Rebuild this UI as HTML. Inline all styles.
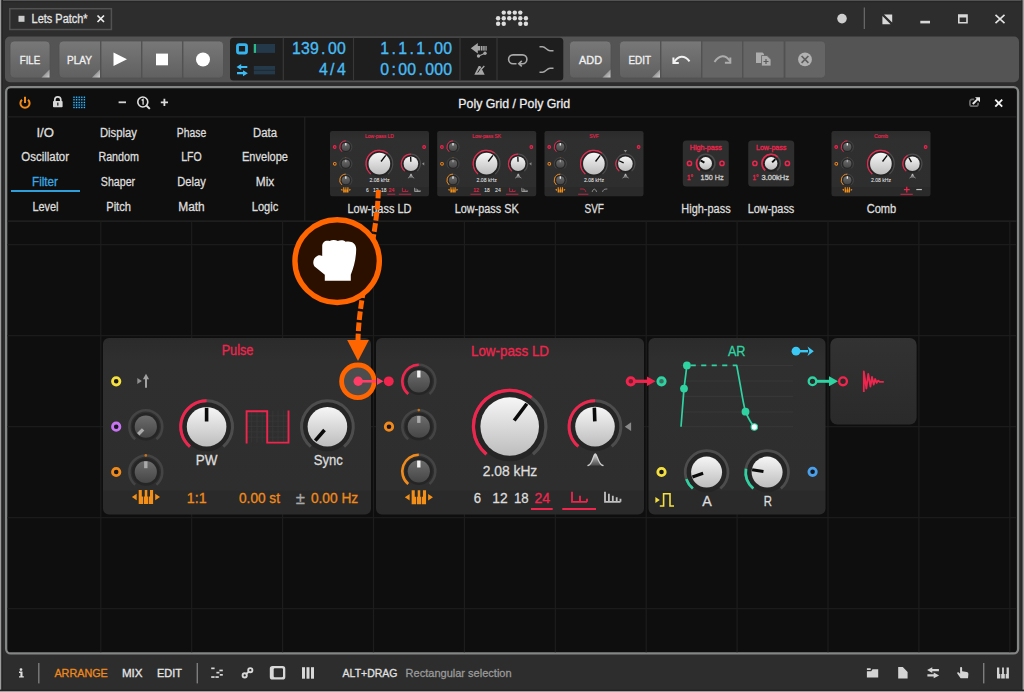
<!DOCTYPE html><html><head><meta charset="utf-8"><title>Poly Grid</title>
<style>html,body{margin:0;padding:0;background:#2d2d2d;}svg{display:block;font-family:"Liberation Sans",sans-serif;}</style></head><body>
<svg width="1024" height="692" viewBox="0 0 1024 692">
<defs>
<linearGradient id="gw" x1="0" y1="0" x2="0" y2="1"><stop offset="0" stop-color="#f6f6f6"/><stop offset="1" stop-color="#bdbdbd"/></linearGradient>
<linearGradient id="gd" x1="0" y1="0" x2="0" y2="1"><stop offset="0" stop-color="#6c6c6c"/><stop offset="1" stop-color="#464646"/></linearGradient>
<linearGradient id="gm" x1="0" y1="0" x2="0" y2="1"><stop offset="0" stop-color="#2b2b2b"/><stop offset="0.13" stop-color="#2f2f2f"/><stop offset="0.862" stop-color="#2e2e2e"/><stop offset="0.866" stop-color="#2a2a2a"/><stop offset="1" stop-color="#2a2a2a"/></linearGradient>
<linearGradient id="gm2" x1="0" y1="0" x2="0" y2="1"><stop offset="0" stop-color="#323232"/><stop offset="1" stop-color="#2a2a2a"/></linearGradient>
<linearGradient id="gb" x1="0" y1="0" x2="0" y2="1"><stop offset="0" stop-color="#787878"/><stop offset="1" stop-color="#606060"/></linearGradient>
<linearGradient id="gbell" x1="0" y1="0" x2="0" y2="1"><stop offset="0" stop-color="#e4e4e4"/><stop offset="1" stop-color="#6a6a6a" stop-opacity="0.55"/></linearGradient>
<linearGradient id="gtri" x1="0" y1="0" x2="1" y2="1"><stop offset="0.5" stop-color="#999"/><stop offset="1" stop-color="#d0d0d0"/></linearGradient>
<clipPath id="cpanel"><rect x="7.300" y="221" width="1009.600" height="431.300"/></clipPath>
</defs>
<rect width="1024" height="692" fill="#2d2d2d"/>
<rect width="1024" height="1.2" fill="#525252"/><rect y="1.2" width="1024" height="1" fill="#242424"/>
<rect x="1.2" width="1.8" height="692" fill="#252525"/><rect width="1.2" height="692" fill="#9c9c9c"/>
<rect x="1021.4" width="1.2" height="692" fill="#252525"/><rect x="1022.6" width="1.4" height="692" fill="#a0a0a0"/>
<rect y="689.6" width="1024" height="1.4" fill="#252525"/><rect y="691" width="1024" height="1" fill="#a0a0a0"/>
<rect x="9.8" y="8.7" width="101.6" height="20.8" fill="#2d2d2d" stroke="#525252" stroke-width="1.5"/>
<rect x="18.5" y="15.800" width="6" height="6" fill="#ccc"/>
<text x="31.6" y="23.2" font-size="12" fill="#e4e4e4" textLength="56" lengthAdjust="spacingAndGlyphs" stroke="#e4e4e4" stroke-width="0.3">Lets Patch*</text>
<path d="M97.500 15.500l6.500 6.500m0 -6.500l-6.500 6.500" stroke="#eee" stroke-width="1.700" fill="none"/>
<circle cx="503.75" cy="12.6" r="2.2" fill="#dedede"/>
<circle cx="509.25" cy="12.6" r="2.2" fill="#dedede"/>
<circle cx="514.8" cy="12.6" r="2.2" fill="#dedede"/>
<circle cx="520.3" cy="12.6" r="2.2" fill="#dedede"/>
<circle cx="498.1" cy="18.25" r="2.2" fill="#dedede"/>
<circle cx="503.75" cy="18.25" r="2.2" fill="#dedede"/>
<circle cx="509.25" cy="18.25" r="2.2" fill="#dedede"/>
<circle cx="514.8" cy="18.25" r="2.2" fill="#dedede"/>
<circle cx="520.3" cy="18.25" r="2.2" fill="#dedede"/>
<circle cx="525.9" cy="18.25" r="2.2" fill="#dedede"/>
<circle cx="498.1" cy="23.75" r="2.2" fill="#dedede"/>
<circle cx="503.75" cy="23.75" r="2.2" fill="#dedede"/>
<circle cx="520.3" cy="23.75" r="2.2" fill="#dedede"/>
<circle cx="525.9" cy="23.75" r="2.2" fill="#dedede"/>
<circle cx="842" cy="18.600" r="4.800" fill="#cfcfcf"/>
<rect x="863.700" y="7.500" width="1.300" height="21.500" fill="#666"/>
<path d="M884 14.400h8.200v8.200zM882.400 16v8.200h8.200z" fill="#d8d8d8"/>
<rect x="920.300" y="20.800" width="9.700" height="2.600" fill="#d8d8d8"/>
<path d="M958 14.200h9.800v9.400h-9.800zM959.600 17.600v4.400h6.600v-4.400z" fill="#d8d8d8" fill-rule="evenodd"/>
<path d="M995.500 14.800l9 8.400m0 -8.400l-9 8.400" stroke="#e4e4e4" stroke-width="1.600" fill="none"/>
<rect x="5" y="36.500" width="1014" height="45.800" rx="5" fill="#545454"/>
<path d="M14 41h32a4 4 0 0 1 4 4v29a4 4 0 0 1 -4 4h-32a4 4 0 0 1 -4 -4v-29a4 4 0 0 1 4 -4z" fill="url(#gb)" stroke="#505050" stroke-width="0.8"/>
<path d="M49.5 69.5v8h-8z" fill="url(#gtri)"/>
<text x="30" y="63.6" font-size="11" fill="#f0f0f0" text-anchor="middle" textLength="20.5" lengthAdjust="spacingAndGlyphs" stroke="#f0f0f0" stroke-width="0.35">FILE</text>
<path d="M63 41h37.49a0.01 0.01 0 0 1 0.01 0.01v36.98a0.01 0.01 0 0 1 -0.01 0.01h-37.49a4 4 0 0 1 -4 -4v-29a4 4 0 0 1 4 -4z" fill="url(#gb)" stroke="#505050" stroke-width="0.8"/>
<path d="M100.0 69.5v8h-8z" fill="url(#gtri)"/>
<text x="79.5" y="63.6" font-size="11" fill="#f0f0f0" text-anchor="middle" textLength="25" lengthAdjust="spacingAndGlyphs" stroke="#f0f0f0" stroke-width="0.35">PLAY</text>
<path d="M101.01 41h40.480000000000004a0.01 0.01 0 0 1 0.01 0.01v36.98a0.01 0.01 0 0 1 -0.01 0.01h-40.480000000000004a0.01 0.01 0 0 1 -0.01 -0.01v-36.98a0.01 0.01 0 0 1 0.01 -0.01z" fill="url(#gb)" stroke="#505050" stroke-width="0.8"/>
<path d="M113.500 52.500l13.500 6.800l-13.500 6.800z" fill="#fff"/>
<path d="M142.01 41h40.480000000000004a0.01 0.01 0 0 1 0.01 0.01v36.98a0.01 0.01 0 0 1 -0.01 0.01h-40.480000000000004a0.01 0.01 0 0 1 -0.01 -0.01v-36.98a0.01 0.01 0 0 1 0.01 -0.01z" fill="url(#gb)" stroke="#505050" stroke-width="0.8"/>
<rect x="156" y="53.600" width="12" height="11.700" fill="#fff"/>
<path d="M183.01 41h36.49a4 4 0 0 1 4 4v29a4 4 0 0 1 -4 4h-36.49a0.01 0.01 0 0 1 -0.01 -0.01v-36.98a0.01 0.01 0 0 1 0.01 -0.01z" fill="url(#gb)" stroke="#505050" stroke-width="0.8"/>
<circle cx="203" cy="59.500" r="7" fill="#fff"/>
<path d="M573.5 41h33.5a4 4 0 0 1 4 4v29a4 4 0 0 1 -4 4h-33.5a4 4 0 0 1 -4 -4v-29a4 4 0 0 1 4 -4z" fill="url(#gb)" stroke="#505050" stroke-width="0.8"/>
<path d="M610.5 69.5v8h-8z" fill="url(#gtri)"/>
<text x="590.5" y="63.6" font-size="11" fill="#f0f0f0" text-anchor="middle" textLength="23" lengthAdjust="spacingAndGlyphs" stroke="#f0f0f0" stroke-width="0.35">ADD</text>
<path d="M623.5 41h36.99a0.01 0.01 0 0 1 0.01 0.01v36.98a0.01 0.01 0 0 1 -0.01 0.01h-36.99a4 4 0 0 1 -4 -4v-29a4 4 0 0 1 4 -4z" fill="url(#gb)" stroke="#505050" stroke-width="0.8"/>
<path d="M660.0 69.5v8h-8z" fill="url(#gtri)"/>
<text x="639.7" y="63.6" font-size="11" fill="#f0f0f0" text-anchor="middle" textLength="22.5" lengthAdjust="spacingAndGlyphs" stroke="#f0f0f0" stroke-width="0.35">EDIT</text>
<path d="M661.01 41h40.480000000000004a0.01 0.01 0 0 1 0.01 0.01v36.98a0.01 0.01 0 0 1 -0.01 0.01h-40.480000000000004a0.01 0.01 0 0 1 -0.01 -0.01v-36.98a0.01 0.01 0 0 1 0.01 -0.01z" fill="url(#gb)" stroke="#505050" stroke-width="0.8"/>
<path d="M674 62.300c4 -7 10.500 -7.500 15.500 -1" fill="none" stroke="#f2f2f2" stroke-width="2"/><path d="M673.400 57.600v5.400h5.400" fill="none" stroke="#f2f2f2" stroke-width="2"/>
<path d="M702.01 41h40.480000000000004a0.01 0.01 0 0 1 0.01 0.01v36.98a0.01 0.01 0 0 1 -0.01 0.01h-40.480000000000004a0.01 0.01 0 0 1 -0.01 -0.01v-36.98a0.01 0.01 0 0 1 0.01 -0.01z" fill="#656565" stroke="#505050" stroke-width="0.8"/>
<path d="M714.500 62c5 -7.500 11 -7.500 15.500 -1" fill="none" stroke="#adadad" stroke-width="2"/><path d="M730.300 57.400v5.400h-5.400" fill="none" stroke="#adadad" stroke-width="2"/>
<path d="M743.01 41h40.980000000000004a0.01 0.01 0 0 1 0.01 0.01v36.98a0.01 0.01 0 0 1 -0.01 0.01h-40.980000000000004a0.01 0.01 0 0 1 -0.01 -0.01v-36.98a0.01 0.01 0 0 1 0.01 -0.01z" fill="#656565" stroke="#505050" stroke-width="0.8"/>
<path d="M756 52.500h6.500l1.500 1.500v9h-8z" fill="#adadad"/><path d="M761.500 55.500h5.500l4 4v6.500h-9.500z" fill="#adadad" stroke="#656565" stroke-width="0.800"/><path d="M766 59v5m-2.500 -2.500h5" stroke="#5a5a5a" stroke-width="1.200"/>
<path d="M785.01 41h36.49a4 4 0 0 1 4 4v29a4 4 0 0 1 -4 4h-36.49a0.01 0.01 0 0 1 -0.01 -0.01v-36.98a0.01 0.01 0 0 1 0.01 -0.01z" fill="#656565" stroke="#505050" stroke-width="0.8"/>
<circle cx="805" cy="59.400" r="6.900" fill="#b2b2b2"/><path d="M801.600 56l6.800 6.800m0 -6.800l-6.800 6.800" stroke="#5f5f5f" stroke-width="1.700"/>
<rect x="230" y="37.800" width="333.300" height="42.800" rx="3.500" fill="#1e1e1e"/>
<rect x="282.7" y="37.800" width="1.200" height="42.800" fill="#383838"/>
<rect x="352.9" y="37.800" width="1.200" height="42.800" fill="#383838"/>
<rect x="459.4" y="37.800" width="1.200" height="42.800" fill="#383838"/>
<rect x="496.4" y="37.800" width="1.200" height="42.800" fill="#383838"/>
<rect x="237.500" y="44.600" width="9" height="8.400" rx="1.600" fill="none" stroke="#35b4f0" stroke-width="2.800"/>
<rect x="253.800" y="44" width="21.200" height="8.900" fill="#24394a"/><rect x="253.800" y="44" width="2.200" height="8.900" fill="#2db88a"/>
<path d="M236.500 67l4.700 -2.900v1.900h6.100v2.100h-6.100v1.800zM247.900 73.200l-4.900 -3v1.900h-6v2.100h6v2z" fill="#3cbcf5"/>
<rect x="253.800" y="66" width="21.200" height="3.900" fill="#24394a"/><rect x="253.800" y="70.500" width="21.200" height="3.900" fill="#24394a"/>
<text x="291.91 300.91 309.91 321.10 327.91 336.91" y="54.1" font-size="15.8" fill="#48bbf3" stroke="#48bbf3" stroke-width="0.35">139.00</text>
<text x="318.91 330.10 336.91" y="74.9" font-size="15.8" fill="#48bbf3" stroke="#48bbf3" stroke-width="0.35">4/4</text>
<text x="380.21 391.40 398.21 409.40 416.21 427.40 434.21 443.21" y="54.1" font-size="15.8" fill="#48bbf3" stroke="#48bbf3" stroke-width="0.35">1.1.1.00</text>
<text x="380.21 391.40 398.21 407.21 418.40 425.21 434.21 443.21" y="74.9" font-size="15.8" fill="#48bbf3" stroke="#48bbf3" stroke-width="0.35">0:00.000</text>
<g fill="#a6a6a6"><path d="M470.800 48.300l7 -5.300v3h2.500v4.600h-2.500v3z"/><rect x="481" y="46" width="1.500" height="4.600"/><rect x="483.200" y="46" width="1.500" height="4.600"/><rect x="485.400" y="46" width="1.300" height="4.600"/><circle cx="478.500" cy="56" r="1.700"/><circle cx="485" cy="53.300" r="1.700"/><path d="M478.500 55.400l6.500 -2.700l0.400 1.100l-6.500 2.700z"/></g>
<path d="M474.300 74.800l4.400 -8.800h1.600l4.400 8.800z" fill="#a6a6a6"/><path d="M478.700 72l5.600 -6" stroke="#a6a6a6" stroke-width="1.300"/><path d="M477.700 72.600l2.700 -4.200" stroke="#1e1e1e" stroke-width="1"/>
<path d="M516.500 63.700h-3.500a4.400 4.400 0 0 1 0 -8.800h9.500a4.400 4.400 0 0 1 0 8.800h-3.300m2.600 -2.800l-3 2.800l3 2.600" fill="none" stroke="#a8a8a8" stroke-width="1.600"/>
<path d="M539.500 46.700h3c3 0 4.500 4 7.500 4h3.500" fill="none" stroke="#a8a8a8" stroke-width="1.500"/>
<path d="M539.500 72.300h3c3 0 4.500 -4 7.500 -4h3.500" fill="none" stroke="#a8a8a8" stroke-width="1.500"/>
<rect x="6.150" y="87.150" width="1011.900" height="566.300" rx="4.500" fill="#0e0e0e" stroke="#848686" stroke-width="2.300"/>
<rect x="7.300" y="116.400" width="1009.600" height="1" fill="#252525"/>
<rect x="7.300" y="220.500" width="1009.600" height="1.200" fill="#252525"/>
<rect x="304.300" y="117" width="1" height="104" fill="#262626"/>
<path d="M22 99.700a4.600 4.600 0 1 0 6 0" fill="none" stroke="#f08a1a" stroke-width="2"/><path d="M25 96.800v6.300" stroke="#f08a1a" stroke-width="2"/>
<path d="M54.800 101.500v-1.700a3 3 0 0 1 6 0v1.700" fill="none" stroke="#d8d8d8" stroke-width="1.700"/><rect x="53" y="101" width="9.600" height="6.200" rx="0.800" fill="#d8d8d8"/><rect x="57.100" y="102.600" width="1.400" height="3" fill="#333"/>
<rect x="72.800" y="96" width="12.800" height="12.800" fill="#0a1c2a"/>
<circle cx="74.00" cy="97.20" r="0.76" fill="#42c2ff"/>
<circle cx="74.00" cy="99.80" r="0.76" fill="#42c2ff"/>
<circle cx="74.00" cy="102.40" r="0.76" fill="#42c2ff"/>
<circle cx="74.00" cy="105.00" r="0.76" fill="#42c2ff"/>
<circle cx="74.00" cy="107.60" r="0.76" fill="#42c2ff"/>
<circle cx="76.60" cy="97.20" r="0.76" fill="#42c2ff"/>
<circle cx="76.60" cy="99.80" r="0.76" fill="#42c2ff"/>
<circle cx="76.60" cy="102.40" r="0.76" fill="#42c2ff"/>
<circle cx="76.60" cy="105.00" r="0.76" fill="#42c2ff"/>
<circle cx="76.60" cy="107.60" r="0.76" fill="#42c2ff"/>
<circle cx="79.20" cy="97.20" r="0.76" fill="#42c2ff"/>
<circle cx="79.20" cy="99.80" r="0.76" fill="#42c2ff"/>
<circle cx="79.20" cy="102.40" r="0.76" fill="#42c2ff"/>
<circle cx="79.20" cy="105.00" r="0.76" fill="#42c2ff"/>
<circle cx="79.20" cy="107.60" r="0.76" fill="#42c2ff"/>
<circle cx="81.80" cy="97.20" r="0.76" fill="#42c2ff"/>
<circle cx="81.80" cy="99.80" r="0.76" fill="#42c2ff"/>
<circle cx="81.80" cy="102.40" r="0.76" fill="#42c2ff"/>
<circle cx="81.80" cy="105.00" r="0.76" fill="#42c2ff"/>
<circle cx="81.80" cy="107.60" r="0.76" fill="#42c2ff"/>
<circle cx="84.40" cy="97.20" r="0.76" fill="#42c2ff"/>
<circle cx="84.40" cy="99.80" r="0.76" fill="#42c2ff"/>
<circle cx="84.40" cy="102.40" r="0.76" fill="#42c2ff"/>
<circle cx="84.40" cy="105.00" r="0.76" fill="#42c2ff"/>
<circle cx="84.40" cy="107.60" r="0.76" fill="#42c2ff"/>
<rect x="118.600" y="101.400" width="7.400" height="1.800" fill="#d4d4d4"/>
<circle cx="142.800" cy="102" r="5" fill="none" stroke="#e0e0e0" stroke-width="1.600"/><path d="M146.600 105.800l3.200 3.100" stroke="#e0e0e0" stroke-width="2"/><path d="M141.600 100.400l1.500 -1v5.400" fill="none" stroke="#e0e0e0" stroke-width="1.300"/>
<path d="M160.800 102.300h7.200m-3.600 -3.600v7.200" stroke="#dcdcdc" stroke-width="1.800"/>
<text x="514.2" y="107.5" font-size="13" fill="#ececec" text-anchor="middle" textLength="111.7" lengthAdjust="spacingAndGlyphs" stroke="#ececec" stroke-width="0.3">Poly Grid / Poly Grid</text>
<path d="M974.200 99.400h-2.100a2.200 2.200 0 0 0 -2.200 2.200v2.400a2.200 2.200 0 0 0 2.200 2.200h3.800a2.200 2.200 0 0 0 2.200 -2.200v-1.200" fill="none" stroke="#686868" stroke-width="1.800"/><path d="M972.800 104l5.400 -5.400" stroke="#e8e8e8" stroke-width="2"/><path d="M975 97.200h5v5z" fill="#e8e8e8"/>
<path d="M995.300 99.700l6.900 6.900m0 -6.900l-6.900 6.900" stroke="#f4f4f4" stroke-width="1.900"/>
<text x="45.2" y="136.6" font-size="12" fill="#dcdcdc" text-anchor="middle" textLength="17.5" lengthAdjust="spacingAndGlyphs" stroke="#dcdcdc" stroke-width="0.3">I/O</text>
<text x="118.4" y="136.6" font-size="12" fill="#dcdcdc" text-anchor="middle" textLength="37" lengthAdjust="spacingAndGlyphs" stroke="#dcdcdc" stroke-width="0.3">Display</text>
<text x="191.5" y="136.6" font-size="12" fill="#dcdcdc" text-anchor="middle" textLength="29.5" lengthAdjust="spacingAndGlyphs" stroke="#dcdcdc" stroke-width="0.3">Phase</text>
<text x="265" y="136.6" font-size="12" fill="#dcdcdc" text-anchor="middle" textLength="24" lengthAdjust="spacingAndGlyphs" stroke="#dcdcdc" stroke-width="0.3">Data</text>
<text x="45.2" y="161.20000000000002" font-size="12" fill="#dcdcdc" text-anchor="middle" textLength="47.7" lengthAdjust="spacingAndGlyphs" stroke="#dcdcdc" stroke-width="0.3">Oscillator</text>
<text x="118.7" y="161.20000000000002" font-size="12" fill="#dcdcdc" text-anchor="middle" textLength="40.6" lengthAdjust="spacingAndGlyphs" stroke="#dcdcdc" stroke-width="0.3">Random</text>
<text x="191.5" y="161.20000000000002" font-size="12" fill="#dcdcdc" text-anchor="middle" textLength="20.5" lengthAdjust="spacingAndGlyphs" stroke="#dcdcdc" stroke-width="0.3">LFO</text>
<text x="265" y="161.20000000000002" font-size="12" fill="#dcdcdc" text-anchor="middle" textLength="46" lengthAdjust="spacingAndGlyphs" stroke="#dcdcdc" stroke-width="0.3">Envelope</text>
<text x="45" y="185.9" font-size="12" fill="#3aa8e4" text-anchor="middle" textLength="25.8" lengthAdjust="spacingAndGlyphs" stroke="#3aa8e4" stroke-width="0.3">Filter</text>
<text x="118" y="185.9" font-size="12" fill="#dcdcdc" text-anchor="middle" textLength="34.3" lengthAdjust="spacingAndGlyphs" stroke="#dcdcdc" stroke-width="0.3">Shaper</text>
<text x="191.5" y="185.9" font-size="12" fill="#dcdcdc" text-anchor="middle" textLength="28.5" lengthAdjust="spacingAndGlyphs" stroke="#dcdcdc" stroke-width="0.3">Delay</text>
<text x="265" y="185.9" font-size="12" fill="#dcdcdc" text-anchor="middle" textLength="18.5" lengthAdjust="spacingAndGlyphs" stroke="#dcdcdc" stroke-width="0.3">Mix</text>
<text x="45.5" y="210.6" font-size="12" fill="#dcdcdc" text-anchor="middle" textLength="26.1" lengthAdjust="spacingAndGlyphs" stroke="#dcdcdc" stroke-width="0.3">Level</text>
<text x="118.6" y="210.6" font-size="12" fill="#dcdcdc" text-anchor="middle" textLength="24.8" lengthAdjust="spacingAndGlyphs" stroke="#dcdcdc" stroke-width="0.3">Pitch</text>
<text x="191.5" y="210.6" font-size="12" fill="#dcdcdc" text-anchor="middle" textLength="26.5" lengthAdjust="spacingAndGlyphs" stroke="#dcdcdc" stroke-width="0.3">Math</text>
<text x="265" y="210.6" font-size="12" fill="#dcdcdc" text-anchor="middle" textLength="26.5" lengthAdjust="spacingAndGlyphs" stroke="#dcdcdc" stroke-width="0.3">Logic</text>
<rect x="11" y="190" width="69" height="2" fill="#2f9fdb"/>
<g transform="translate(330 131) scale(0.3694)">
<rect x="0" y="0" width="268" height="176.5" rx="6" fill="url(#gm)"/>
<text x="134" y="17.6" font-size="14.2" fill="#f0254e" text-anchor="middle" textLength="78" lengthAdjust="spacingAndGlyphs" stroke="#f0254e" stroke-width="0.3">Low-pass LD</text>
<circle cx="12.75" cy="43.3" r="3.7" fill="#7a1c30" stroke="#f0254e" stroke-width="2.8"/>
<circle cx="13" cy="88.7" r="3.7" fill="#16162a" stroke="#f08a1a" stroke-width="2.8"/>
<circle cx="254.8" cy="43.3" r="3.7" fill="#7a1c30" stroke="#f0254e" stroke-width="2.8"/>
<circle cx="42.8" cy="43.3" r="13.8" fill="#252525"/>
<path d="M32.19 55.94A16.5 16.5 0 1 1 53.41 55.94" fill="none" stroke="#444" stroke-width="2.6" stroke-linecap="butt"/>
<path d="M32.19 55.94A16.5 16.5 0 0 1 42.80 26.80" fill="none" stroke="#f0254e" stroke-width="2.6" stroke-linecap="butt"/>
<circle cx="42.8" cy="43.3" r="11.1" fill="url(#gd)"/>
<line x1="42.80" y1="39.50" x2="42.80" y2="32.60" stroke="#f4f4f4" stroke-width="3.4"/>
<circle cx="42.8" cy="88.7" r="13.8" fill="#252525"/>
<path d="M32.19 101.34A16.5 16.5 0 1 1 53.41 101.34" fill="none" stroke="#444" stroke-width="2.6" stroke-linecap="butt"/>
<circle cx="42.8" cy="88.7" r="11.1" fill="url(#gd)"/>
<line x1="42.80" y1="84.90" x2="42.80" y2="78.00" stroke="#aaa" stroke-width="3.4"/>
<circle cx="42.8" cy="72.1" r="1.3" fill="#c8721a"/>
<circle cx="42.8" cy="133.3" r="13.8" fill="#252525"/>
<path d="M32.19 145.94A16.5 16.5 0 1 1 53.41 145.94" fill="none" stroke="#444" stroke-width="2.6" stroke-linecap="butt"/>
<path d="M32.19 145.94A16.5 16.5 0 0 1 42.80 116.80" fill="none" stroke="#f08a1a" stroke-width="2.6" stroke-linecap="butt"/>
<circle cx="42.8" cy="133.3" r="11.1" fill="url(#gd)"/>
<line x1="42.80" y1="129.50" x2="42.80" y2="122.60" stroke="#f4f4f4" stroke-width="3.4"/>
<g fill="#f49017"><path d="M28.85 159.2l4.8 -3.2v6.400z"/><path d="M56.95 159.2l-4.8 -3.2v6.400z"/><path d="M35.65 152.2h3.100v6.500h1.400v7.600h-4.500z"/><path d="M41.70 152.2h2.550v6.500h1v7.600h-4.300v-7.600h0.750z"/><path d="M46.95 152.2h3.100v14.100h-4.100v-7.600h1z"/></g>
<circle cx="133.7" cy="88.5" r="34.80" fill="#252525"/>
<path d="M110.43 116.23A36.2 36.2 0 1 1 156.97 116.23" fill="none" stroke="#4d4d4d" stroke-width="3.2" stroke-linecap="butt"/>
<path d="M110.43 116.23A36.2 36.2 0 0 1 155.49 59.59" fill="none" stroke="#f0254e" stroke-width="3.2" stroke-linecap="butt"/>
<circle cx="133.7" cy="88.5" r="29.3" fill="url(#gw)"/>
<line x1="138.21" y1="82.51" x2="150.85" y2="65.74" stroke="#0a0a0a" stroke-width="3.6"/>
<text x="134" y="138.1" font-size="14.3" fill="#dcdcdc" text-anchor="middle" textLength="54.6" lengthAdjust="spacingAndGlyphs" stroke="#dcdcdc" stroke-width="0.3">2.08 kHz</text>
<circle cx="219" cy="88.6" r="24.60" fill="#252525"/>
<path d="M202.35 108.44A25.9 25.9 0 1 1 235.65 108.44" fill="none" stroke="#4d4d4d" stroke-width="3.0" stroke-linecap="butt"/>
<path d="M202.35 108.44A25.9 25.9 0 0 1 219.00 62.70" fill="none" stroke="#f0254e" stroke-width="3.0" stroke-linecap="butt"/>
<circle cx="219" cy="88.6" r="19.8" fill="url(#gw)"/>
<line x1="218.82" y1="83.40" x2="218.34" y2="69.61" stroke="#0a0a0a" stroke-width="3.6"/>
<path d="M248.8 88.7l6.3 -4.4v8.8z" fill="#8a8a8a"/>
<path d="M212 127.500C216.500 127 217.300 116 219.300 116C221.300 116 222.100 127 227 127.500" fill="url(#gbell)" stroke="#cfcfcf" stroke-width="1.300" stroke-linecap="round"/>
<text x="97.7" y="164.8" font-size="14.3" fill="#dcdcdc" textLength="7.3" lengthAdjust="spacingAndGlyphs" stroke="#dcdcdc" stroke-width="0.3">6</text>
<text x="116.3" y="164.8" font-size="14.3" fill="#dcdcdc" textLength="15.4" lengthAdjust="spacingAndGlyphs" stroke="#dcdcdc" stroke-width="0.3">12</text>
<text x="137.9" y="164.8" font-size="14.3" fill="#dcdcdc" textLength="14.7" lengthAdjust="spacingAndGlyphs" stroke="#dcdcdc" stroke-width="0.3">18</text>
<text x="158.4" y="164.8" font-size="14.3" fill="#f0254e" textLength="15.6" lengthAdjust="spacingAndGlyphs" stroke="#f0254e" stroke-width="0.3">24</text>
<rect x="155" y="170" width="21.7" height="2" fill="#f0254e"/>
<path d="M196 153.8v10h8m0 -6v6h7m0 -3v3" fill="none" stroke="#f0254e" stroke-width="1.8"/>
<rect x="186.3" y="170" width="33.7" height="2" fill="#f0254e"/>
<path d="M229 153.8v10h15.5m-11.6 0v-8m3.9 8v-6m3.9 6v-4.500m3.800 4.500v-3" fill="none" stroke="#c0c0c0" stroke-width="1.8"/>
</g>
<g transform="translate(437.2 131) scale(0.3694)">
<rect x="0" y="0" width="268" height="176.5" rx="6" fill="url(#gm)"/>
<text x="134" y="17.6" font-size="14.2" fill="#f0254e" text-anchor="middle" textLength="78" lengthAdjust="spacingAndGlyphs" stroke="#f0254e" stroke-width="0.3">Low-pass SK</text>
<circle cx="12.75" cy="43.3" r="3.7" fill="#7a1c30" stroke="#f0254e" stroke-width="2.8"/>
<circle cx="13" cy="88.7" r="3.7" fill="#16162a" stroke="#f08a1a" stroke-width="2.8"/>
<circle cx="254.8" cy="43.3" r="3.7" fill="#7a1c30" stroke="#f0254e" stroke-width="2.8"/>
<circle cx="42.8" cy="43.3" r="13.8" fill="#252525"/>
<path d="M32.19 55.94A16.5 16.5 0 1 1 53.41 55.94" fill="none" stroke="#444" stroke-width="2.6" stroke-linecap="butt"/>
<path d="M32.19 55.94A16.5 16.5 0 0 1 42.80 26.80" fill="none" stroke="#f0254e" stroke-width="2.6" stroke-linecap="butt"/>
<circle cx="42.8" cy="43.3" r="11.1" fill="url(#gd)"/>
<line x1="42.80" y1="39.50" x2="42.80" y2="32.60" stroke="#f4f4f4" stroke-width="3.4"/>
<circle cx="42.8" cy="88.7" r="13.8" fill="#252525"/>
<path d="M32.19 101.34A16.5 16.5 0 1 1 53.41 101.34" fill="none" stroke="#444" stroke-width="2.6" stroke-linecap="butt"/>
<circle cx="42.8" cy="88.7" r="11.1" fill="url(#gd)"/>
<line x1="42.80" y1="84.90" x2="42.80" y2="78.00" stroke="#aaa" stroke-width="3.4"/>
<circle cx="42.8" cy="72.1" r="1.3" fill="#c8721a"/>
<circle cx="42.8" cy="133.3" r="13.8" fill="#252525"/>
<path d="M32.19 145.94A16.5 16.5 0 1 1 53.41 145.94" fill="none" stroke="#444" stroke-width="2.6" stroke-linecap="butt"/>
<path d="M32.19 145.94A16.5 16.5 0 0 1 42.80 116.80" fill="none" stroke="#f08a1a" stroke-width="2.6" stroke-linecap="butt"/>
<circle cx="42.8" cy="133.3" r="11.1" fill="url(#gd)"/>
<line x1="42.80" y1="129.50" x2="42.80" y2="122.60" stroke="#f4f4f4" stroke-width="3.4"/>
<g fill="#f49017"><path d="M28.85 159.2l4.8 -3.2v6.400z"/><path d="M56.95 159.2l-4.8 -3.2v6.400z"/><path d="M35.65 152.2h3.100v6.500h1.400v7.600h-4.500z"/><path d="M41.70 152.2h2.550v6.500h1v7.600h-4.300v-7.600h0.750z"/><path d="M46.95 152.2h3.100v14.100h-4.100v-7.600h1z"/></g>
<circle cx="133.7" cy="88.5" r="34.80" fill="#252525"/>
<path d="M110.43 116.23A36.2 36.2 0 1 1 156.97 116.23" fill="none" stroke="#4d4d4d" stroke-width="3.2" stroke-linecap="butt"/>
<path d="M110.43 116.23A36.2 36.2 0 0 1 155.49 59.59" fill="none" stroke="#f0254e" stroke-width="3.2" stroke-linecap="butt"/>
<circle cx="133.7" cy="88.5" r="29.3" fill="url(#gw)"/>
<line x1="138.21" y1="82.51" x2="150.85" y2="65.74" stroke="#0a0a0a" stroke-width="3.6"/>
<text x="134" y="138.1" font-size="14.3" fill="#dcdcdc" text-anchor="middle" textLength="54.6" lengthAdjust="spacingAndGlyphs" stroke="#dcdcdc" stroke-width="0.3">2.08 kHz</text>
<circle cx="219" cy="88.6" r="24.60" fill="#252525"/>
<path d="M202.35 108.44A25.9 25.9 0 1 1 235.65 108.44" fill="none" stroke="#4d4d4d" stroke-width="3.0" stroke-linecap="butt"/>
<path d="M202.35 108.44A25.9 25.9 0 0 1 219.00 62.70" fill="none" stroke="#f0254e" stroke-width="3.0" stroke-linecap="butt"/>
<circle cx="219" cy="88.6" r="19.8" fill="url(#gw)"/>
<line x1="218.82" y1="83.40" x2="218.34" y2="69.61" stroke="#0a0a0a" stroke-width="3.6"/>
<path d="M248.8 88.7l6.3 -4.4v8.8z" fill="#8a8a8a"/>
<path d="M212 127.500C216.500 127 217.300 116 219.300 116C221.300 116 222.100 127 227 127.500" fill="url(#gbell)" stroke="#cfcfcf" stroke-width="1.300" stroke-linecap="round"/>
<text x="97.3" y="164.8" font-size="14.3" fill="#f0254e" textLength="15.4" lengthAdjust="spacingAndGlyphs" stroke="#f0254e" stroke-width="0.3">12</text>
<rect x="90" y="170" width="29" height="2" fill="#f0254e"/>
<text x="127.6" y="164.8" font-size="14.3" fill="#dcdcdc" textLength="14.7" lengthAdjust="spacingAndGlyphs" stroke="#dcdcdc" stroke-width="0.3">18</text>
<text x="156.5" y="164.8" font-size="14.3" fill="#dcdcdc" textLength="15.6" lengthAdjust="spacingAndGlyphs" stroke="#dcdcdc" stroke-width="0.3">24</text>
<path d="M196 153.8v10h8m0 -6v6h7m0 -3v3" fill="none" stroke="#f0254e" stroke-width="1.8"/>
<rect x="186.3" y="170" width="33.7" height="2" fill="#f0254e"/>
<path d="M229 153.8v10h15.5m-11.6 0v-8m3.9 8v-6m3.9 6v-4.500m3.800 4.500v-3" fill="none" stroke="#c0c0c0" stroke-width="1.8"/>
</g>
<g transform="translate(544.5 131) scale(0.3694)">
<rect x="0" y="0" width="268" height="176.5" rx="6" fill="url(#gm)"/>
<text x="134" y="17.6" font-size="14.2" fill="#f0254e" text-anchor="middle" textLength="26" lengthAdjust="spacingAndGlyphs" stroke="#f0254e" stroke-width="0.3">SVF</text>
<circle cx="12.75" cy="43.3" r="3.7" fill="#7a1c30" stroke="#f0254e" stroke-width="2.8"/>
<circle cx="13" cy="88.7" r="3.7" fill="#16162a" stroke="#f08a1a" stroke-width="2.8"/>
<circle cx="254.8" cy="43.3" r="3.7" fill="#7a1c30" stroke="#f0254e" stroke-width="2.8"/>
<circle cx="42.8" cy="43.3" r="13.8" fill="#252525"/>
<path d="M32.19 55.94A16.5 16.5 0 1 1 53.41 55.94" fill="none" stroke="#444" stroke-width="2.6" stroke-linecap="butt"/>
<path d="M32.19 55.94A16.5 16.5 0 0 1 42.80 26.80" fill="none" stroke="#f0254e" stroke-width="2.6" stroke-linecap="butt"/>
<circle cx="42.8" cy="43.3" r="11.1" fill="url(#gd)"/>
<line x1="42.80" y1="39.50" x2="42.80" y2="32.60" stroke="#f4f4f4" stroke-width="3.4"/>
<circle cx="42.8" cy="88.7" r="13.8" fill="#252525"/>
<path d="M32.19 101.34A16.5 16.5 0 1 1 53.41 101.34" fill="none" stroke="#444" stroke-width="2.6" stroke-linecap="butt"/>
<circle cx="42.8" cy="88.7" r="11.1" fill="url(#gd)"/>
<line x1="42.80" y1="84.90" x2="42.80" y2="78.00" stroke="#aaa" stroke-width="3.4"/>
<circle cx="42.8" cy="72.1" r="1.3" fill="#c8721a"/>
<circle cx="42.8" cy="133.3" r="13.8" fill="#252525"/>
<path d="M32.19 145.94A16.5 16.5 0 1 1 53.41 145.94" fill="none" stroke="#444" stroke-width="2.6" stroke-linecap="butt"/>
<path d="M32.19 145.94A16.5 16.5 0 0 1 42.80 116.80" fill="none" stroke="#f08a1a" stroke-width="2.6" stroke-linecap="butt"/>
<circle cx="42.8" cy="133.3" r="11.1" fill="url(#gd)"/>
<line x1="42.80" y1="129.50" x2="42.80" y2="122.60" stroke="#f4f4f4" stroke-width="3.4"/>
<g fill="#f49017"><path d="M28.85 159.2l4.8 -3.2v6.400z"/><path d="M56.95 159.2l-4.8 -3.2v6.400z"/><path d="M35.65 152.2h3.100v6.500h1.400v7.600h-4.500z"/><path d="M41.70 152.2h2.550v6.500h1v7.600h-4.300v-7.600h0.750z"/><path d="M46.95 152.2h3.100v14.100h-4.100v-7.600h1z"/></g>
<circle cx="133.7" cy="88.5" r="34.80" fill="#252525"/>
<path d="M110.43 116.23A36.2 36.2 0 1 1 156.97 116.23" fill="none" stroke="#4d4d4d" stroke-width="3.2" stroke-linecap="butt"/>
<path d="M110.43 116.23A36.2 36.2 0 0 1 155.49 59.59" fill="none" stroke="#f0254e" stroke-width="3.2" stroke-linecap="butt"/>
<circle cx="133.7" cy="88.5" r="29.3" fill="url(#gw)"/>
<line x1="138.21" y1="82.51" x2="150.85" y2="65.74" stroke="#0a0a0a" stroke-width="3.6"/>
<text x="134" y="138.1" font-size="14.3" fill="#dcdcdc" text-anchor="middle" textLength="54.6" lengthAdjust="spacingAndGlyphs" stroke="#dcdcdc" stroke-width="0.3">2.08 kHz</text>
<circle cx="219" cy="88.6" r="24.60" fill="#252525"/>
<path d="M202.35 108.44A25.9 25.9 0 1 1 235.65 108.44" fill="none" stroke="#4d4d4d" stroke-width="3.0" stroke-linecap="butt"/>
<path d="M202.35 108.44A25.9 25.9 0 0 1 195.53 77.65" fill="none" stroke="#f0254e" stroke-width="3.0" stroke-linecap="butt"/>
<circle cx="219" cy="88.6" r="19.8" fill="url(#gw)"/>
<line x1="214.29" y1="86.40" x2="201.78" y2="80.57" stroke="#0a0a0a" stroke-width="3.6"/>
<path d="M219 58l-4.4 -6.3h8.8z" fill="#8a8a8a"/>
<path d="M212 127.500C216.500 127 217.300 116 219.300 116C221.300 116 222.100 127 227 127.500" fill="url(#gbell)" stroke="#cfcfcf" stroke-width="1.300" stroke-linecap="round"/>
<path d="M96 157h8c5 0 6 3 8 8" fill="none" stroke="#f0254e" stroke-width="1.8"/>
<rect x="91" y="170" width="28" height="2" fill="#f0254e"/>
<path d="M129 165c3 -10 9 -10 12 0" fill="none" stroke="#c0c0c0" stroke-width="1.8"/>
<path d="M157 165c2 -5 3 -8 13 -8" fill="none" stroke="#c0c0c0" stroke-width="1.8"/>
</g>
<g transform="translate(831.5 131) scale(0.3694)">
<rect x="0" y="0" width="268" height="176.5" rx="6" fill="url(#gm)"/>
<text x="134" y="17.6" font-size="14.2" fill="#f0254e" text-anchor="middle" textLength="38" lengthAdjust="spacingAndGlyphs" stroke="#f0254e" stroke-width="0.3">Comb</text>
<circle cx="12.75" cy="43.3" r="3.7" fill="#7a1c30" stroke="#f0254e" stroke-width="2.8"/>
<circle cx="13" cy="88.7" r="3.7" fill="#16162a" stroke="#f08a1a" stroke-width="2.8"/>
<circle cx="254.8" cy="43.3" r="3.7" fill="#7a1c30" stroke="#f0254e" stroke-width="2.8"/>
<circle cx="42.8" cy="43.3" r="13.8" fill="#252525"/>
<path d="M32.19 55.94A16.5 16.5 0 1 1 53.41 55.94" fill="none" stroke="#444" stroke-width="2.6" stroke-linecap="butt"/>
<path d="M32.19 55.94A16.5 16.5 0 0 1 42.80 26.80" fill="none" stroke="#f0254e" stroke-width="2.6" stroke-linecap="butt"/>
<circle cx="42.8" cy="43.3" r="11.1" fill="url(#gd)"/>
<line x1="42.80" y1="39.50" x2="42.80" y2="32.60" stroke="#f4f4f4" stroke-width="3.4"/>
<circle cx="42.8" cy="88.7" r="13.8" fill="#252525"/>
<path d="M32.19 101.34A16.5 16.5 0 1 1 53.41 101.34" fill="none" stroke="#444" stroke-width="2.6" stroke-linecap="butt"/>
<circle cx="42.8" cy="88.7" r="11.1" fill="url(#gd)"/>
<line x1="42.80" y1="84.90" x2="42.80" y2="78.00" stroke="#aaa" stroke-width="3.4"/>
<circle cx="42.8" cy="72.1" r="1.3" fill="#c8721a"/>
<circle cx="42.8" cy="133.3" r="13.8" fill="#252525"/>
<path d="M32.19 145.94A16.5 16.5 0 1 1 53.41 145.94" fill="none" stroke="#444" stroke-width="2.6" stroke-linecap="butt"/>
<path d="M32.19 145.94A16.5 16.5 0 0 1 42.80 116.80" fill="none" stroke="#f08a1a" stroke-width="2.6" stroke-linecap="butt"/>
<circle cx="42.8" cy="133.3" r="11.1" fill="url(#gd)"/>
<line x1="42.80" y1="129.50" x2="42.80" y2="122.60" stroke="#f4f4f4" stroke-width="3.4"/>
<g fill="#f49017"><path d="M28.85 159.2l4.8 -3.2v6.400z"/><path d="M56.95 159.2l-4.8 -3.2v6.400z"/><path d="M35.65 152.2h3.100v6.500h1.400v7.600h-4.500z"/><path d="M41.70 152.2h2.550v6.500h1v7.600h-4.300v-7.600h0.750z"/><path d="M46.95 152.2h3.100v14.100h-4.100v-7.600h1z"/></g>
<circle cx="133.7" cy="88.5" r="34.80" fill="#252525"/>
<path d="M110.43 116.23A36.2 36.2 0 1 1 156.97 116.23" fill="none" stroke="#4d4d4d" stroke-width="3.2" stroke-linecap="butt"/>
<path d="M110.43 116.23A36.2 36.2 0 0 1 155.49 59.59" fill="none" stroke="#f0254e" stroke-width="3.2" stroke-linecap="butt"/>
<circle cx="133.7" cy="88.5" r="29.3" fill="url(#gw)"/>
<line x1="138.21" y1="82.51" x2="150.85" y2="65.74" stroke="#0a0a0a" stroke-width="3.6"/>
<text x="134" y="138.1" font-size="14.3" fill="#dcdcdc" text-anchor="middle" textLength="54.6" lengthAdjust="spacingAndGlyphs" stroke="#dcdcdc" stroke-width="0.3">2.08 kHz</text>
<circle cx="219" cy="88.6" r="24.60" fill="#252525"/>
<path d="M202.35 108.44A25.9 25.9 0 1 1 235.65 108.44" fill="none" stroke="#4d4d4d" stroke-width="3.0" stroke-linecap="butt"/>
<path d="M202.35 108.44A25.9 25.9 0 0 1 206.05 66.17" fill="none" stroke="#f0254e" stroke-width="3.0" stroke-linecap="butt"/>
<circle cx="219" cy="88.6" r="19.8" fill="url(#gw)"/>
<line x1="216.40" y1="84.10" x2="209.50" y2="72.15" stroke="#0a0a0a" stroke-width="3.6"/>
<path d="M212 127.500C216.500 127 217.300 116 219.300 116C221.300 116 222.100 127 227 127.500" fill="url(#gbell)" stroke="#cfcfcf" stroke-width="1.300" stroke-linecap="round"/>
<path d="M196 158.500h15.600m-7.800 -7.800v15.600" stroke="#f0254e" stroke-width="3.200" fill="none"/>
<rect x="186.7" y="170" width="33.300" height="2.400" fill="#f0254e"/>
<path d="M229.500 158.500h15.200" stroke="#c0c0c0" stroke-width="3.200" fill="none"/>
</g>
<text x="379.5" y="212.6" font-size="12" fill="#dcdcdc" text-anchor="middle" textLength="64" lengthAdjust="spacingAndGlyphs" stroke="#dcdcdc" stroke-width="0.3">Low-pass LD</text>
<text x="486.7" y="212.6" font-size="12" fill="#dcdcdc" text-anchor="middle" textLength="64" lengthAdjust="spacingAndGlyphs" stroke="#dcdcdc" stroke-width="0.3">Low-pass SK</text>
<text x="594.2" y="212.6" font-size="12" fill="#dcdcdc" text-anchor="middle" textLength="19.5" lengthAdjust="spacingAndGlyphs" stroke="#dcdcdc" stroke-width="0.3">SVF</text>
<text x="706" y="212.6" font-size="12" fill="#dcdcdc" text-anchor="middle" textLength="49.3" lengthAdjust="spacingAndGlyphs" stroke="#dcdcdc" stroke-width="0.3">High-pass</text>
<text x="771" y="212.6" font-size="12" fill="#dcdcdc" text-anchor="middle" textLength="46.6" lengthAdjust="spacingAndGlyphs" stroke="#dcdcdc" stroke-width="0.3">Low-pass</text>
<text x="881.5" y="212.6" font-size="12" fill="#dcdcdc" text-anchor="middle" textLength="29.6" lengthAdjust="spacingAndGlyphs" stroke="#dcdcdc" stroke-width="0.3">Comb</text>
<rect x="682.8" y="140.600" width="46" height="45.800" rx="3.500" fill="#2e2e2e"/>
<text x="705.8" y="150" font-size="7.6" fill="#f0254e" text-anchor="middle" textLength="32" lengthAdjust="spacingAndGlyphs" stroke="#f0254e" stroke-width="0.3">High-pass</text>
<circle cx="689.5" cy="163.4" r="2.1" fill="#2e2e2e" stroke="#f0254e" stroke-width="1.5"/>
<circle cx="722.0" cy="163.4" r="2.1" fill="#2e2e2e" stroke="#f0254e" stroke-width="1.5"/>
<circle cx="705.6999999999999" cy="163.4" r="8.500" fill="#222"/>
<path d="M699.79 170.45A9.2 9.2 0 1 1 711.61 170.45" fill="none" stroke="#4b4b4b" stroke-width="1.6" stroke-linecap="butt"/>
<path d="M699.79 170.45A9.2 9.2 0 0 1 697.73 158.80" fill="none" stroke="#f0254e" stroke-width="1.6" stroke-linecap="butt"/>
<circle cx="705.6999999999999" cy="163.4" r="6.300" fill="url(#gw)"/>
<line x1="704.40" y1="162.65" x2="700.50" y2="160.40" stroke="#0a0a0a" stroke-width="2"/>
<text x="687.0" y="180" font-size="7.6" fill="#f0254e" textLength="6" lengthAdjust="spacingAndGlyphs" stroke="#f0254e" stroke-width="0.3">1°</text>
<text x="723.5999999999999" y="180" font-size="7.6" fill="#cfcfcf" text-anchor="end" textLength="23" lengthAdjust="spacingAndGlyphs" stroke="#cfcfcf" stroke-width="0.3">150 Hz</text>
<rect x="748.2" y="140.600" width="46" height="45.800" rx="3.500" fill="#2e2e2e"/>
<text x="771.2" y="150" font-size="7.6" fill="#f0254e" text-anchor="middle" textLength="30.5" lengthAdjust="spacingAndGlyphs" stroke="#f0254e" stroke-width="0.3">Low-pass</text>
<circle cx="754.9000000000001" cy="163.4" r="2.1" fill="#2e2e2e" stroke="#f0254e" stroke-width="1.5"/>
<circle cx="787.4000000000001" cy="163.4" r="2.1" fill="#2e2e2e" stroke="#f0254e" stroke-width="1.5"/>
<circle cx="771.1" cy="163.4" r="8.500" fill="#222"/>
<path d="M765.19 170.45A9.2 9.2 0 1 1 777.01 170.45" fill="none" stroke="#4b4b4b" stroke-width="1.6" stroke-linecap="butt"/>
<path d="M765.19 170.45A9.2 9.2 0 1 1 777.61 156.89" fill="none" stroke="#f0254e" stroke-width="1.6" stroke-linecap="butt"/>
<circle cx="771.1" cy="163.4" r="6.300" fill="url(#gw)"/>
<line x1="772.16" y1="162.34" x2="775.34" y2="159.16" stroke="#0a0a0a" stroke-width="2"/>
<text x="752.4000000000001" y="180" font-size="7.6" fill="#f0254e" textLength="6" lengthAdjust="spacingAndGlyphs" stroke="#f0254e" stroke-width="0.3">1°</text>
<text x="789.0" y="180" font-size="7.6" fill="#cfcfcf" text-anchor="end" textLength="27.5" lengthAdjust="spacingAndGlyphs" stroke="#cfcfcf" stroke-width="0.3">3.00kHz</text>
<g clip-path="url(#cpanel)">
<rect x="100.2" y="221" width="1.200" height="432" fill="#1d1d1d"/>
<rect x="191.1" y="221" width="1.200" height="432" fill="#1d1d1d"/>
<rect x="282.0" y="221" width="1.200" height="432" fill="#1d1d1d"/>
<rect x="372.9" y="221" width="1.200" height="432" fill="#1d1d1d"/>
<rect x="463.8" y="221" width="1.200" height="432" fill="#1d1d1d"/>
<rect x="554.7" y="221" width="1.200" height="432" fill="#1d1d1d"/>
<rect x="645.6" y="221" width="1.200" height="432" fill="#1d1d1d"/>
<rect x="736.5" y="221" width="1.200" height="432" fill="#1d1d1d"/>
<rect x="827.4" y="221" width="1.200" height="432" fill="#1d1d1d"/>
<rect x="918.3" y="221" width="1.200" height="432" fill="#1d1d1d"/>
<rect x="1009.2" y="221" width="1.200" height="432" fill="#1d1d1d"/>
<rect x="7" y="244.1" width="1010" height="1.200" fill="#1d1d1d"/>
<rect x="7" y="335.1" width="1010" height="1.200" fill="#1d1d1d"/>
<rect x="7" y="426.1" width="1010" height="1.200" fill="#1d1d1d"/>
<rect x="7" y="517.1" width="1010" height="1.200" fill="#1d1d1d"/>
<rect x="7" y="608.1" width="1010" height="1.200" fill="#1d1d1d"/>
</g>
<rect x="103" y="338" width="268" height="176.5" rx="6" fill="url(#gm)"/>
<text x="237.5" y="355.4" font-size="14.2" fill="#f0254e" text-anchor="middle" textLength="31.7" lengthAdjust="spacingAndGlyphs" stroke="#f0254e" stroke-width="0.3">Pulse</text>
<circle cx="116.2" cy="381.3" r="3.7" fill="#17171f" stroke="#f5e040" stroke-width="2.8"/>
<circle cx="116.2" cy="426.7" r="3.7" fill="#17171f" stroke="#c873f2" stroke-width="2.8"/>
<circle cx="116.2" cy="472" r="3.7" fill="#17171f" stroke="#f08a1a" stroke-width="2.8"/>
<path d="M137.300 378.100l4.600 2.900l-4.600 2.900z" fill="#909090"/><path d="M146 387.800v-9.500" stroke="#a2a2a2" stroke-width="2"/><path d="M146 373.700l3.100 5.500h-6.200z" fill="#a2a2a2"/>
<circle cx="145.8" cy="426.7" r="13.8" fill="#252525"/>
<path d="M135.19 439.34A16.5 16.5 0 1 1 156.41 439.34" fill="none" stroke="#444" stroke-width="2.6" stroke-linecap="butt"/>
<circle cx="145.8" cy="426.7" r="11.1" fill="url(#gd)"/>
<line x1="143.11" y1="429.39" x2="138.23" y2="434.27" stroke="#aaa" stroke-width="3.4"/>
<circle cx="145.8" cy="472" r="13.8" fill="#252525"/>
<path d="M135.19 484.64A16.5 16.5 0 1 1 156.41 484.64" fill="none" stroke="#444" stroke-width="2.6" stroke-linecap="butt"/>
<circle cx="145.8" cy="472" r="11.1" fill="url(#gd)"/>
<line x1="145.80" y1="468.20" x2="145.80" y2="461.30" stroke="#aaa" stroke-width="3.4"/>
<circle cx="145.8" cy="455.4" r="1.3" fill="#c8721a"/>
<g fill="#f49017"><path d="M131.90 497l4.8 -3.2v6.400z"/><path d="M160.00 497l-4.8 -3.2v6.400z"/><path d="M138.70 490h3.100v6.500h1.400v7.600h-4.500z"/><path d="M144.75 490h2.550v6.500h1v7.600h-4.300v-7.600h0.750z"/><path d="M150.00 490h3.100v14.100h-4.100v-7.600h1z"/></g>
<circle cx="206.6" cy="426.7" r="24.60" fill="#252525"/>
<path d="M189.95 446.54A25.9 25.9 0 1 1 223.25 446.54" fill="none" stroke="#4d4d4d" stroke-width="3.0" stroke-linecap="butt"/>
<path d="M189.95 446.54A25.9 25.9 0 0 1 206.60 400.80" fill="none" stroke="#f0254e" stroke-width="3.0" stroke-linecap="butt"/>
<circle cx="206.6" cy="426.7" r="19.8" fill="url(#gw)"/>
<line x1="206.60" y1="421.50" x2="206.60" y2="407.70" stroke="#0a0a0a" stroke-width="3.6"/>
<text x="206.7" y="464.7" font-size="13.9" fill="#dcdcdc" text-anchor="middle" textLength="21.7" lengthAdjust="spacingAndGlyphs" stroke="#dcdcdc" stroke-width="0.3">PW</text>
<g stroke="#3a3a3a" stroke-width="0.700">
<path d="M251.7 410.500v32"/>
<path d="M257.0 410.500v32"/>
<path d="M262.2 410.500v32"/>
<path d="M267.5 410.500v32"/>
<path d="M272.8 410.500v32"/>
<path d="M278.1 410.500v32"/>
<path d="M283.4 410.500v32"/>
<path d="M246.400 415.9h42.200"/>
<path d="M246.400 421.2h42.200"/>
<path d="M246.400 426.6h42.200"/>
<path d="M246.400 431.9h42.200"/>
<path d="M246.400 437.2h42.200"/>
</g>
<path d="M246.600 443.500v-32.200h20.600v31.300h21.300v-32.200" fill="none" stroke="#f0254e" stroke-width="1.900"/>
<circle cx="327.4" cy="426.7" r="24.60" fill="#252525"/>
<path d="M310.75 446.54A25.9 25.9 0 1 1 344.05 446.54" fill="none" stroke="#4d4d4d" stroke-width="3.0" stroke-linecap="butt"/>
<circle cx="327.4" cy="426.7" r="19.8" fill="url(#gw)"/>
<line x1="324.51" y1="430.02" x2="315.26" y2="440.66" stroke="#0a0a0a" stroke-width="3.6"/>
<text x="328.3" y="464.7" font-size="13.9" fill="#dcdcdc" text-anchor="middle" textLength="29" lengthAdjust="spacingAndGlyphs" stroke="#dcdcdc" stroke-width="0.3">Sync</text>
<text x="186.8" y="502.8" font-size="14" fill="#f08a1a" textLength="19.8" lengthAdjust="spacingAndGlyphs" stroke="#f08a1a" stroke-width="0.3">1:1</text>
<text x="239" y="502.8" font-size="14" fill="#f08a1a" textLength="41" lengthAdjust="spacingAndGlyphs" stroke="#f08a1a" stroke-width="0.3">0.00 st</text>
<text x="295.8" y="504.3" font-size="17" fill="#a8a8a8" textLength="9.2" lengthAdjust="spacingAndGlyphs" stroke="#a8a8a8" stroke-width="0.3">±</text>
<text x="310.9" y="502.8" font-size="14" fill="#f08a1a" textLength="47.3" lengthAdjust="spacingAndGlyphs" stroke="#f08a1a" stroke-width="0.3">0.00 Hz</text>
<circle cx="357.900" cy="381.300" r="16.300" fill="#4d4d4d" stroke="#ff6500" stroke-width="4.800"/>
<circle cx="358.200" cy="381.300" r="4.700" fill="#ff3d66"/><path d="M358 381.300h21" stroke="#ff3d66" stroke-width="2.600"/>
<g transform="translate(376 338)">
<rect x="0" y="0" width="268" height="176.5" rx="6" fill="url(#gm)"/>
<text x="134" y="17.6" font-size="14.2" fill="#f0254e" text-anchor="middle" textLength="78" lengthAdjust="spacingAndGlyphs" stroke="#f0254e" stroke-width="0.3">Low-pass LD</text>
<circle cx="12.75" cy="43.3" r="4.9" fill="#f0254e"/>
<circle cx="13" cy="88.7" r="3.7" fill="#16162a" stroke="#f08a1a" stroke-width="2.8"/>
<circle cx="254.8" cy="43.3" r="3.7" fill="#7a1c30" stroke="#f0254e" stroke-width="2.8"/>
<circle cx="42.8" cy="43.3" r="13.8" fill="#252525"/>
<path d="M32.19 55.94A16.5 16.5 0 1 1 53.41 55.94" fill="none" stroke="#444" stroke-width="2.6" stroke-linecap="butt"/>
<path d="M32.19 55.94A16.5 16.5 0 0 1 42.80 26.80" fill="none" stroke="#f0254e" stroke-width="2.6" stroke-linecap="butt"/>
<circle cx="42.8" cy="43.3" r="11.1" fill="url(#gd)"/>
<line x1="42.80" y1="39.50" x2="42.80" y2="32.60" stroke="#f4f4f4" stroke-width="3.4"/>
<circle cx="42.8" cy="88.7" r="13.8" fill="#252525"/>
<path d="M32.19 101.34A16.5 16.5 0 1 1 53.41 101.34" fill="none" stroke="#444" stroke-width="2.6" stroke-linecap="butt"/>
<circle cx="42.8" cy="88.7" r="11.1" fill="url(#gd)"/>
<line x1="42.80" y1="84.90" x2="42.80" y2="78.00" stroke="#aaa" stroke-width="3.4"/>
<circle cx="42.8" cy="72.1" r="1.3" fill="#c8721a"/>
<circle cx="42.8" cy="133.3" r="13.8" fill="#252525"/>
<path d="M32.19 145.94A16.5 16.5 0 1 1 53.41 145.94" fill="none" stroke="#444" stroke-width="2.6" stroke-linecap="butt"/>
<path d="M32.19 145.94A16.5 16.5 0 0 1 42.80 116.80" fill="none" stroke="#f08a1a" stroke-width="2.6" stroke-linecap="butt"/>
<circle cx="42.8" cy="133.3" r="11.1" fill="url(#gd)"/>
<line x1="42.80" y1="129.50" x2="42.80" y2="122.60" stroke="#f4f4f4" stroke-width="3.4"/>
<g fill="#f49017"><path d="M28.85 159.2l4.8 -3.2v6.400z"/><path d="M56.95 159.2l-4.8 -3.2v6.400z"/><path d="M35.65 152.2h3.100v6.500h1.400v7.600h-4.500z"/><path d="M41.70 152.2h2.550v6.500h1v7.600h-4.300v-7.600h0.750z"/><path d="M46.95 152.2h3.100v14.100h-4.100v-7.600h1z"/></g>
<circle cx="133.7" cy="88.5" r="34.80" fill="#252525"/>
<path d="M110.43 116.23A36.2 36.2 0 1 1 156.97 116.23" fill="none" stroke="#4d4d4d" stroke-width="3.2" stroke-linecap="butt"/>
<path d="M110.43 116.23A36.2 36.2 0 0 1 155.49 59.59" fill="none" stroke="#f0254e" stroke-width="3.2" stroke-linecap="butt"/>
<circle cx="133.7" cy="88.5" r="29.3" fill="url(#gw)"/>
<line x1="138.21" y1="82.51" x2="150.85" y2="65.74" stroke="#0a0a0a" stroke-width="3.6"/>
<text x="134" y="138.1" font-size="14.3" fill="#dcdcdc" text-anchor="middle" textLength="54.6" lengthAdjust="spacingAndGlyphs" stroke="#dcdcdc" stroke-width="0.3">2.08 kHz</text>
<circle cx="219" cy="88.6" r="24.60" fill="#252525"/>
<path d="M202.35 108.44A25.9 25.9 0 1 1 235.65 108.44" fill="none" stroke="#4d4d4d" stroke-width="3.0" stroke-linecap="butt"/>
<path d="M202.35 108.44A25.9 25.9 0 0 1 219.00 62.70" fill="none" stroke="#f0254e" stroke-width="3.0" stroke-linecap="butt"/>
<circle cx="219" cy="88.6" r="19.8" fill="url(#gw)"/>
<line x1="218.82" y1="83.40" x2="218.34" y2="69.61" stroke="#0a0a0a" stroke-width="3.6"/>
<path d="M248.8 88.7l6.3 -4.4v8.8z" fill="#8a8a8a"/>
<path d="M212 127.500C216.500 127 217.300 116 219.300 116C221.300 116 222.100 127 227 127.500" fill="url(#gbell)" stroke="#cfcfcf" stroke-width="1.300" stroke-linecap="round"/>
<text x="97.7" y="164.8" font-size="14.3" fill="#dcdcdc" textLength="7.3" lengthAdjust="spacingAndGlyphs" stroke="#dcdcdc" stroke-width="0.3">6</text>
<text x="116.3" y="164.8" font-size="14.3" fill="#dcdcdc" textLength="15.4" lengthAdjust="spacingAndGlyphs" stroke="#dcdcdc" stroke-width="0.3">12</text>
<text x="137.9" y="164.8" font-size="14.3" fill="#dcdcdc" textLength="14.7" lengthAdjust="spacingAndGlyphs" stroke="#dcdcdc" stroke-width="0.3">18</text>
<text x="158.4" y="164.8" font-size="14.3" fill="#f0254e" textLength="15.6" lengthAdjust="spacingAndGlyphs" stroke="#f0254e" stroke-width="0.3">24</text>
<rect x="155" y="170" width="21.7" height="2" fill="#f0254e"/>
<path d="M196 153.8v10h8m0 -6v6h7m0 -3v3" fill="none" stroke="#f0254e" stroke-width="1.8"/>
<rect x="186.3" y="170" width="33.7" height="2" fill="#f0254e"/>
<path d="M229 153.8v10h15.5m-11.6 0v-8m3.9 8v-6m3.9 6v-4.500m3.800 4.500v-3" fill="none" stroke="#c0c0c0" stroke-width="1.8"/>
</g>
<path d="M377 377.600l6.400 3.700l-6.400 3.700z" fill="#ff3d66"/>
<path d="M635 381.300h14" stroke="#f0254e" stroke-width="3.300"/>
<rect x="648.5" y="338" width="177" height="176.5" rx="6" fill="url(#gm)"/>
<path d="M647 376.500l8.600 4.800l-8.600 4.800z" fill="#f0254e"/>
<text x="736.7" y="355.6" font-size="14.2" fill="#2fd3a2" text-anchor="middle" textLength="17.6" lengthAdjust="spacingAndGlyphs" stroke="#2fd3a2" stroke-width="0.3">AR</text>
<circle cx="661.5" cy="381.3" r="3.7" fill="#3c6f60" stroke="#2fd3a2" stroke-width="2.8"/>
<rect x="681" y="365.0" width="112" height="0.800" fill="#3b3b3b"/>
<rect x="681" y="380.6" width="112" height="0.800" fill="#3b3b3b"/>
<rect x="681" y="395.90000000000003" width="112" height="0.800" fill="#3b3b3b"/>
<rect x="681" y="411.6" width="112" height="0.800" fill="#3b3b3b"/>
<rect x="681" y="426.40000000000003" width="112" height="0.800" fill="#3b3b3b"/>
<path d="M681 426.800l3 -38.200l2.900 -23.200M736.700 365.400l4 22c2 12 3 18 4.800 24.300c2.500 6 5 11 8.800 15.300" fill="none" stroke="#2fd3a2" stroke-width="1.700"/>
<path d="M690.700 365.400h46.500" stroke="#2fd3a2" stroke-width="1.700" stroke-dasharray="5.100 5.400"/>
<circle cx="684" cy="388.6" r="3.900" fill="#2fd3a2"/>
<circle cx="686.9" cy="365.4" r="3.900" fill="#2fd3a2"/>
<circle cx="745.5" cy="411.7" r="3.900" fill="#2fd3a2"/>
<circle cx="754.300" cy="427" r="3.200" fill="#fff" stroke="#2fd3a2" stroke-width="1.100"/>
<circle cx="796" cy="351.200" r="4.400" fill="#3cc8f5"/><path d="M796 351.200h12" stroke="#3cc8f5" stroke-width="2.400"/><path d="M813.800 351.200l-6.300 -4.800l1.800 4.800l-1.800 4.800z" fill="#3cc8f5"/>
<circle cx="661.5" cy="472" r="3.7" fill="#17171f" stroke="#f5e040" stroke-width="2.8"/>
<circle cx="812.6" cy="471.8" r="3.7" fill="#17171f" stroke="#4aa0ea" stroke-width="2.8"/>
<path d="M655.400 497l4.400 3l-4.400 3z" fill="#f5e040"/><path d="M659.800 506h3.800v-12.300h6.400v12.300h4" fill="none" stroke="#f5e040" stroke-width="1.600"/>
<circle cx="706.6" cy="472.1" r="20.25" fill="#252525"/>
<path d="M692.84 488.49A21.4 21.4 0 1 1 720.36 488.49" fill="none" stroke="#4d4d4d" stroke-width="2.7" stroke-linecap="butt"/>
<path d="M692.84 488.49A21.4 21.4 0 0 1 686.37 479.07" fill="none" stroke="#2fd3a2" stroke-width="2.7" stroke-linecap="butt"/>
<circle cx="706.6" cy="472.1" r="15.5" fill="url(#gw)"/>
<line x1="703.10" y1="473.30" x2="692.42" y2="476.98" stroke="#0a0a0a" stroke-width="3.2"/>
<circle cx="767.1" cy="472.1" r="20.25" fill="#252525"/>
<path d="M753.34 488.49A21.4 21.4 0 1 1 780.86 488.49" fill="none" stroke="#4d4d4d" stroke-width="2.7" stroke-linecap="butt"/>
<path d="M753.34 488.49A21.4 21.4 0 0 1 745.96 468.75" fill="none" stroke="#2fd3a2" stroke-width="2.7" stroke-linecap="butt"/>
<circle cx="767.1" cy="472.1" r="15.5" fill="url(#gw)"/>
<line x1="763.45" y1="471.52" x2="752.09" y2="469.72" stroke="#0a0a0a" stroke-width="3.2"/>
<text x="707" y="505.7" font-size="14.2" fill="#dcdcdc" text-anchor="middle" textLength="9.5" lengthAdjust="spacingAndGlyphs" stroke="#dcdcdc" stroke-width="0.3">A</text>
<text x="767.8" y="505.7" font-size="14.2" fill="#dcdcdc" text-anchor="middle" textLength="8.2" lengthAdjust="spacingAndGlyphs" stroke="#dcdcdc" stroke-width="0.3">R</text>
<rect x="830.3" y="338" width="86.3" height="86.5" rx="7" fill="url(#gm2)"/>
<circle cx="812.5" cy="381.3" r="3.8" fill="#2a2a2a" stroke="#2fd3a2" stroke-width="2.3"/>
<path d="M817 381.300h14" stroke="#2fd3a2" stroke-width="3"/><path d="M829 376.300l9 5l-9 5z" fill="#2fd3a2"/>
<circle cx="843" cy="381.3" r="3.9" fill="#2a2a2a" stroke="#f0254e" stroke-width="2.4"/>
<path d="M863.800 392v-20.500l2.600 17l1.800 -14.500l2.200 12.500l1.600 -9.500l1.700 7.500l1.500 -5.500l1.500 3.800l1.500 -2.200l1.400 1.200h4.200" fill="none" stroke="#f0254e" stroke-width="1.800" stroke-linejoin="round"/>
<path d="M378.400 190C377 241 359 291 358 340" fill="none" stroke="#ff6500" stroke-width="5" stroke-dasharray="8.7 2.49" stroke-dashoffset="0.29"/>
<path d="M347.200 340h21.700l-10.900 21z" fill="#ff6500"/>
<ellipse cx="337.150" cy="261.100" rx="42.200" ry="41.400" fill="#2b1000" stroke="#ff6500" stroke-width="5.400"/>
<path d="M324.800 280.800v-6l-9.600 -7.800c-3.200 -2.800 -2.400 -9.200 2.400 -11.200c1.700 -0.700 3.200 -0.500 4.600 0.200v-9.800c0 -4.400 3.600 -6.400 7.400 -5.200c2.600 -1.400 5.800 -1.400 8.200 0c2.800 -1.100 5.800 -0.800 7.800 0.800c5.600 -1.400 10.800 1.600 10.600 7.400c-0.200 9.800 -2.400 18.400 -5.400 25.600v6z" fill="#fff"/>
<path d="M19 677.500v-1.300h1.400v-3.300h-1.400v-1.300h3.500v4.600h1.300v1.300zM19.600 669.600a1.400 1.400 0 1 1 2.800 0a1.400 1.400 0 1 1 -2.800 0z" fill="#e0e0e0"/>
<rect x="38.100" y="663" width="1.400" height="20.400" fill="#7d7d7d"/>
<text x="54.4" y="677" font-size="11.6" fill="#f08a1a" textLength="53.4" lengthAdjust="spacingAndGlyphs" stroke="#f08a1a" stroke-width="0.3">ARRANGE</text>
<text x="121.9" y="677" font-size="11.6" fill="#e6e6e6" textLength="20.6" lengthAdjust="spacingAndGlyphs" stroke="#e6e6e6" stroke-width="0.3">MIX</text>
<text x="156.9" y="677" font-size="11.6" fill="#e6e6e6" textLength="25" lengthAdjust="spacingAndGlyphs" stroke="#e6e6e6" stroke-width="0.3">EDIT</text>
<rect x="196.600" y="663" width="1.400" height="20.400" fill="#7d7d7d"/>
<g fill="#d8d8d8"><rect x="211.200" y="667.500" width="3.400" height="1.700"/><rect x="219.400" y="669.600" width="3.400" height="1.700"/><rect x="216.400" y="671.800" width="3" height="1.700"/><rect x="219.800" y="674" width="3" height="1.700"/><rect x="211.200" y="676.200" width="3.400" height="1.700"/><rect x="215.400" y="676.200" width="3.400" height="1.700"/></g>
<g fill="none" stroke="#d8d8d8" stroke-width="1.900"><circle cx="244.700" cy="675.400" r="2.100"/><circle cx="250.300" cy="670.200" r="2.100"/><path d="M246.300 673.900l2.400 -2.200"/></g>
<path d="M272.500 666h10.100a2.700 2.700 0 0 1 2.700 2.700v8.200a2.700 2.700 0 0 1 -2.700 2.700h-10.100a2.700 2.700 0 0 1 -2.700 -2.700v-8.200a2.700 2.700 0 0 1 2.700 -2.700zM274.700 668.300a1 1 0 0 0 -1 1v7a1 1 0 0 0 1 1h7.300a1 1 0 0 0 1 -1v-7a1 1 0 0 0 -1 -1z" fill="#d8d8d8" fill-rule="evenodd"/>
<g fill="#d8d8d8"><rect x="302" y="667.200" width="3" height="11.500"/><rect x="306.500" y="667.200" width="3" height="11.500"/><rect x="311" y="667.200" width="3" height="11.500"/></g>
<text x="342.6" y="677" font-size="11.6" fill="#e2e2e2" textLength="54.8" lengthAdjust="spacingAndGlyphs" stroke="#e2e2e2" stroke-width="0.3">ALT+DRAG</text>
<text x="405.6" y="677" font-size="11.6" fill="#9a9a9a" textLength="106" lengthAdjust="spacingAndGlyphs" stroke="#9a9a9a" stroke-width="0.3">Rectangular selection</text>
<path d="M866.900 668.200h3.800v1.700h-3.800zM866.900 671.300h4.300l1.300 -2h5.700v8.200h-11.300z" fill="#d4d4d4"/>
<path d="M898.200 667h4.600l4.800 5v6.400h-9.400z" fill="#d4d4d4"/>
<path d="M927.100 670.100l5.200 -2.900v1.800h6.600v2.200h-6.600v1.800zM939.100 675.400l-5.400 -2.900v1.800h-6.300v2.200h6.300v1.800z" fill="#d4d4d4"/>
<path d="M960.600 678.200l-3.300 -4.600c-0.600 -1 0.600 -1.900 1.500 -1.100l1.300 1.200v-5.700c0 -1.400 2 -1.400 2 0v3.300l4.600 0.800c1.200 0.200 1.800 1 1.700 2.200l-0.400 3.900z" fill="#d4d4d4"/>
<rect x="983" y="663" width="1.400" height="20.400" fill="#7d7d7d"/>
<g fill="#d4d4d4"><path d="M997 667.500h2.300v6.400h1v4.500h-3.300z"/><path d="M1001.200 678.400v-4.500h0.900v-6.400h1.800v6.400h0.900v4.500z"/><path d="M1005.700 678.400v-4.500h0.900v-6.400h2.300v10.900z"/></g>
</svg></body></html>
